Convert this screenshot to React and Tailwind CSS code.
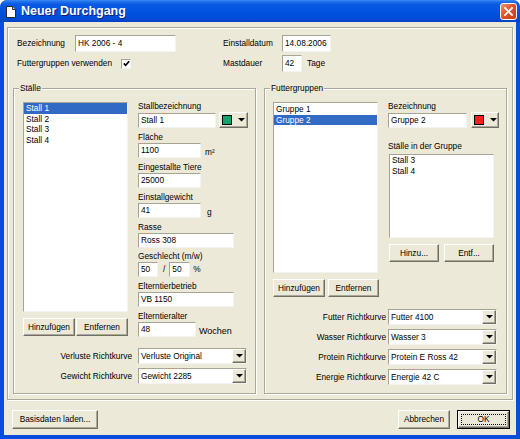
import React from "react";

const sunken =
  "bg-white border border-t-[#A7A493] border-l-[#A7A493] border-b-[#F4F3EE] border-r-[#F4F3EE]";
const raised =
  "bg-[#ECE9D8] border border-t-white border-l-white border-b-[#716F64] border-r-[#716F64] shadow-[inset_-1px_-1px_0_#ACA899]";

function Arrow() {
  return (
    <svg width="7" height="4" viewBox="0 0 7 4">
      <path d="M0 0h7L3.5 3.5z" fill="#000" />
    </svg>
  );
}

function Field({ className = "", children }) {
  return (
    <div className={`${sunken} flex items-center px-[2px] leading-none whitespace-nowrap overflow-hidden ${className}`}>
      {children}
    </div>
  );
}

function Button({ className = "", children }) {
  return (
    <div className={`${raised} flex items-center justify-center leading-none whitespace-nowrap ${className}`}>
      {children}
    </div>
  );
}

function Combo({ value }) {
  return (
    <div className={`${sunken} w-[109px] h-[16px] flex items-stretch leading-none`}>
      <span className="flex-1 flex items-center px-[2px] whitespace-nowrap">{value}</span>
      <span className={`${raised} w-[14px] flex items-center justify-center`}>
        <Arrow />
      </span>
    </div>
  );
}

function ColorButton({ className = "", swatch }) {
  return (
    <div className={`${raised} h-[16px] flex items-center pl-[2px] gap-[6px] ${className}`}>
      <span className={`w-[10px] h-[10px] border border-black ${swatch}`} />
      <Arrow />
    </div>
  );
}

function ListBox({ items, selected, className = "" }) {
  return (
    <div className={`${sunken} flex flex-col ${className}`}>
      {items.map((it) => (
        <div
          key={it}
          className={`h-[10.5px] flex items-center px-[2px] leading-none whitespace-nowrap ${
            it === selected ? "bg-[#316AC5] text-white" : ""
          }`}
        >
          {it}
        </div>
      ))}
    </div>
  );
}

function Label({ className = "h-[15px]", children }) {
  return <div className={`flex items-end pb-[1.5px] leading-none whitespace-nowrap ${className}`}>{children}</div>;
}

function Group({ title, children }) {
  return (
    <div className="relative w-[243px] h-[306px] border border-[#ACA899] shadow-[inset_1px_1px_0_#fff,1px_1px_0_#fff] flex flex-col">
      <span className="absolute -top-[5px] left-[5px] px-[1px] bg-[#ECE9D8] leading-none">{title}</span>
      {children}
    </div>
  );
}

function ComboRow({ label, value, labelW, gap, first }) {
  return (
    <div className={`flex items-center ${first ? "" : "mt-[4px]"}`}>
      <span className={`${labelW} text-right leading-none whitespace-nowrap`}>{label}</span>
      <div className={gap}>
        <Combo value={value} />
      </div>
    </div>
  );
}

function StaelleGroup() {
  return (
    <Group title="Ställe">
      <div className="flex items-start pl-[9px] pt-[8px]">
        <div className="w-[105px] mt-[5px] flex flex-col">
          <ListBox className="h-[210px]" items={["Stall 1", "Stall 2", "Stall 3", "Stall 4"]} selected="Stall 1" />
          <div className="flex gap-[1px] mt-[6px]">
            <Button className="w-[52px] h-[18px]">Hinzufügen</Button>
            <Button className="w-[52px] h-[18px]">Entfernen</Button>
          </div>
        </div>
        <div className="ml-[10px] flex flex-col">
          <Label>Stallbezeichnung</Label>
          <div className="flex items-center">
            <Field className="w-[78px] h-[15px]">Stall 1</Field>
            <ColorButton className="ml-[3px] w-[29px]" swatch="bg-[#10A36E]" />
          </div>
          <Label>Fläche</Label>
          <div className="flex items-center">
            <Field className="w-[63px] h-[15px]">1100</Field>
            <span className="ml-[4px] mt-[4px] leading-none">m²</span>
          </div>
          <Label>Eingestallte Tiere</Label>
          <Field className="w-[63px] h-[15px]">25000</Field>
          <Label>Einstallgewicht</Label>
          <div className="flex items-center">
            <Field className="w-[63px] h-[15px]">41</Field>
            <span className="ml-[6px] mt-[3px] leading-none">g</span>
          </div>
          <Label>Rasse</Label>
          <Field className="w-[96px] h-[15px]">Ross 308</Field>
          <Label className="h-[14px]">Geschlecht (m/w)</Label>
          <div className="flex items-center">
            <Field className="w-[20px] h-[15px]">50</Field>
            <span className="ml-[5px] leading-none">/</span>
            <Field className="ml-[4px] w-[21px] h-[15px]">50</Field>
            <span className="ml-[3px] leading-none">%</span>
          </div>
          <Label>Elterntierbetrieb</Label>
          <Field className="w-[96px] h-[15px]">VB 1150</Field>
          <Label>Elterntieralter</Label>
          <div className="flex items-center">
            <Field className="w-[58px] h-[15px]">48</Field>
            <span className="ml-[3px] mt-[3px] leading-none text-[9px]">Wochen</span>
          </div>
        </div>
      </div>
      <div className="flex flex-col pl-[9px] mt-[11px]">
        <ComboRow first label="Verluste Richtkurve" value="Verluste Original" labelW="w-[109px]" gap="ml-[6px]" />
        <ComboRow label="Gewicht Richtkurve" value="Gewicht 2285" labelW="w-[109px]" gap="ml-[6px]" />
      </div>
    </Group>
  );
}

function FutterGroup() {
  return (
    <Group title="Futtergruppen">
      <div className="flex items-start pl-[8px] pt-[8px]">
        <div className="w-[106px] mt-[5px] flex flex-col">
          <ListBox className="w-[105px] h-[171px] pt-[1px]" items={["Gruppe 1", "Gruppe 2"]} selected="Gruppe 2" />
          <div className="flex mt-[6px]">
            <Button className="w-[52px] h-[18px]">Hinzufügen</Button>
            <Button className="ml-[3px] w-[51px] h-[18px]">Entfernen</Button>
          </div>
        </div>
        <div className="ml-[9px] flex flex-col">
          <Label>Bezeichnung</Label>
          <div className="flex items-center">
            <Field className="w-[79px] h-[15px]">Gruppe 2</Field>
            <ColorButton className="ml-[4px] w-[28px]" swatch="bg-[#F0221E]" />
          </div>
          <Label className="h-[15px] mt-[9px]">Ställe in der Gruppe</Label>
          <ListBox className="ml-[1px] mt-[2px] w-[105px] h-[84px]" items={["Stall 3", "Stall 4"]} />
          <div className="flex mt-[6px] ml-[1px]">
            <Button className="w-[50px] h-[18px]">Hinzu...</Button>
            <Button className="ml-[5px] w-[50px] h-[18px]">Entf...</Button>
          </div>
        </div>
      </div>
      <div className="flex flex-col pl-[8px] mt-[12px]">
        <ComboRow first label="Futter Richtkurve" value="Futter 4100" labelW="w-[113px]" gap="ml-[2px]" />
        <ComboRow label="Wasser Richtkurve" value="Wasser 3" labelW="w-[113px]" gap="ml-[2px]" />
        <ComboRow label="Protein Richtkurve" value="Protein E Ross 42" labelW="w-[113px]" gap="ml-[2px]" />
        <ComboRow label="Energie Richtkurve" value="Energie 42 C" labelW="w-[113px]" gap="ml-[2px]" />
      </div>
    </Group>
  );
}

function TitleBar() {
  return (
    <div className="h-[22px] flex items-center pl-[6px] pr-[3px] rounded-t-[7px] bg-[linear-gradient(to_bottom,#3C8CF5_0%,#1F6FEA_8%,#0A5AE6_20%,#0052E0_55%,#004BD6_85%,#0040C0_100%)]">
      <svg width="10" height="12" viewBox="0 0 10 12" className="mt-[1px]">
        <path d="M0.5 0.5h6l3 3v8h-9z" fill="#fff" stroke="#2a2a2a" strokeWidth="1" />
        <path d="M6.5 0.5v3h3" fill="#d8d8d8" stroke="#2a2a2a" strokeWidth="1" />
      </svg>
      <span className="ml-[5px] text-white font-bold text-[12.5px] leading-none [text-shadow:1px_1px_0_#0A1F7A]">
        Neuer Durchgang
      </span>
      <div className="ml-auto w-[17px] h-[17px] rounded-[3px] border border-white flex items-center justify-center bg-[linear-gradient(135deg,#F2936E_0%,#E0552F_45%,#C83A1A_100%)]">
        <svg width="9" height="9" viewBox="0 0 9 9">
          <path d="M1 1L8 8M8 1L1 8" stroke="#fff" strokeWidth="1.8" strokeLinecap="square" />
        </svg>
      </div>
    </div>
  );
}

export default function App() {
  return (
    <div className="w-[520px] h-[439px] bg-[#0A4DDB] rounded-t-[7px] flex flex-col overflow-hidden [font-family:'Liberation_Sans',Arial,sans-serif] text-[8.3px] text-black">
      <TitleBar />
      <div className="flex-1 mx-[4px] mb-[4px] bg-[#ECE9D8] flex flex-col">
        <div className="mx-[3px] mt-[5px] h-[373px] border border-[#ACA899] shadow-[inset_1px_1px_0_#fff,1px_1px_0_#fff] flex flex-col">
          <div className="flex items-center h-[17px] mt-[7px] pl-[9px]">
            <span className="w-[58px] leading-none">Bezeichnung</span>
            <Field className="w-[101px] h-[17px]">HK 2006 - 4</Field>
            <span className="ml-[47px] w-[59px] leading-none">Einstalldatum</span>
            <Field className="w-[49px] h-[17px]">14.08.2006</Field>
          </div>
          <div className="flex items-center h-[17px] mt-[3px] pl-[9px]">
            <span className="w-[104px] leading-none whitespace-nowrap">Futtergruppen verwenden</span>
            <span className={`${sunken} w-[10px] h-[10px] flex items-center justify-center`}>
              <svg width="7" height="7" viewBox="0 0 7 7">
                <path d="M0.8 3.4L2.7 5.3L6.2 1.2" fill="none" stroke="#000" strokeWidth="1.6" />
              </svg>
            </span>
            <span className="ml-[92px] w-[59px] leading-none">Mastdauer</span>
            <Field className="w-[20px] h-[17px]">42</Field>
            <span className="ml-[5px] leading-none">Tage</span>
          </div>
          <div className="flex gap-[8px] px-[5px] mt-[16px]">
            <StaelleGroup />
            <FutterGroup />
          </div>
        </div>
        <div className="flex items-center h-[19px] mt-[10px]">
          <Button className="ml-[8px] w-[86px] h-[19px]">Basisdaten laden...</Button>
          <Button className="ml-auto w-[52px] h-[19px]">Abbrechen</Button>
          <div className="ml-[7px] mr-[6px] w-[53px] h-[19px] border border-black flex">
            <Button className="flex-1 p-[2px] items-stretch">
              <span className="flex-1 flex items-center justify-center border border-dotted border-black">OK</span>
            </Button>
          </div>
        </div>
      </div>
    </div>
  );
}
